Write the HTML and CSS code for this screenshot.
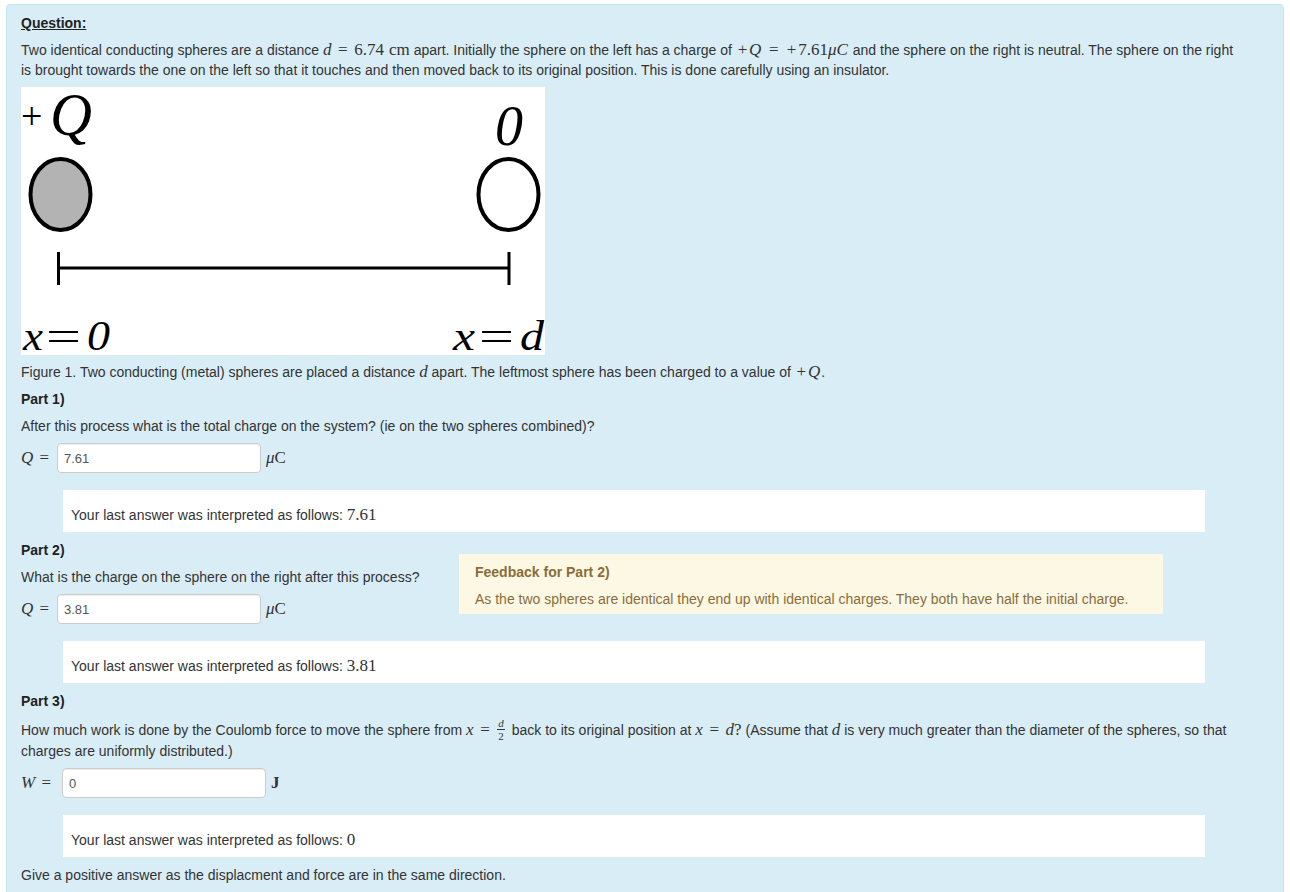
FILE: index.html
```html
<!DOCTYPE html>
<html>
<head>
<meta charset="utf-8">
<link rel="stylesheet" href="styles.css">
</head>
<body>
<div class="page">
  <div class="qbox">
    <h4 class="qlabel">Question:</h4>
    <p>Two identical conducting spheres are a distance <span class="m"><i>d</i><span class="eq">=</span>6.74<span class="sp"></span>cm</span> apart. Initially the sphere on the left has a charge of <span class="m"><span class="op">+</span><i class="q">Q</i><span class="eq">=</span><span class="op">+</span>7.61<i>μ</i><i class="q">C</i></span> and the sphere on the right is neutral. The sphere on the right is brought towards the one on the left so that it touches and then moved back to its original position. This is done carefully using an insulator.</p>

    <svg class="figure" width="524" height="268" viewBox="0 0 524 268">
      <rect x="0" y="0" width="524" height="268" fill="#ffffff"/>
      <text x="0" y="42" class="fup" font-size="38">+</text>
      <text x="29" y="48" class="fit" font-size="62" textLength="42" lengthAdjust="spacingAndGlyphs">Q</text>
      <text x="474" y="58" class="fit" font-size="58" textLength="28" lengthAdjust="spacingAndGlyphs">0</text>
      <ellipse cx="39.5" cy="107.5" rx="30" ry="35.5" fill="#b3b3b3" stroke="#000" stroke-width="4"/>
      <ellipse cx="487.5" cy="107.5" rx="30" ry="35.5" fill="#ffffff" stroke="#000" stroke-width="4"/>
      <line x1="37.5" y1="181" x2="488" y2="181" stroke="#000" stroke-width="3"/>
      <line x1="37.5" y1="165" x2="37.5" y2="198" stroke="#000" stroke-width="3"/>
      <line x1="488" y1="165" x2="488" y2="198" stroke="#000" stroke-width="3"/>
      <text x="2" y="263" class="fit" font-size="42" textLength="20" lengthAdjust="spacingAndGlyphs">x</text>
      <text x="25" y="263" class="fup" font-size="42" textLength="35" lengthAdjust="spacingAndGlyphs">=</text>
      <text x="66" y="263" class="fit" font-size="42" textLength="23" lengthAdjust="spacingAndGlyphs">0</text>
      <text x="432" y="263" class="fit" font-size="42" textLength="22" lengthAdjust="spacingAndGlyphs">x</text>
      <text x="458" y="263" class="fup" font-size="42" textLength="35" lengthAdjust="spacingAndGlyphs">=</text>
      <text x="499" y="263" class="fit" font-size="42" textLength="24" lengthAdjust="spacingAndGlyphs">d</text>
    </svg>

    <p>Figure 1. Two conducting (metal) spheres are placed a distance <span class="m"><i>d</i></span> apart. The leftmost sphere has been charged to a value of <span class="m"><span class="op">+</span><i class="q">Q</i></span>.</p>

    <h4 class="part">Part 1)</h4>
    <p>After this process what is the total charge on the system? (ie on the two spheres combined)?</p>
    <div class="answer-row">
      <span class="m lbl"><i class="q">Q</i><span class="eq">=</span></span>
      <input class="ans" type="text" value="7.61">
      <span class="m unit"><i>μ</i>C</span>
    </div>
    <div class="interp">Your last answer was interpreted as follows: <span class="m big">7.61</span></div>

    <div class="part-split">
      <div class="part-left">
        <h4 class="part">Part 2)</h4>
        <p>What is the charge on the sphere on the right after this process?</p>
        <div class="answer-row">
          <span class="m lbl"><i class="q">Q</i><span class="eq">=</span></span>
          <input class="ans" type="text" value="3.81">
          <span class="m unit"><i>μ</i>C</span>
        </div>
      </div>
      <div class="feedback">
        <h4 class="fb-title">Feedback for Part 2)</h4>
        <p class="fb-text">As the two spheres are identical they end up with identical charges. They both have half the initial charge.</p>
      </div>
    </div>
    <div class="interp">Your last answer was interpreted as follows: <span class="m big">3.81</span></div>

    <h4 class="part">Part 3)</h4>
    <p class="p3">How much work is done by the Coulomb force to move the sphere from <span class="m"><i>x</i><span class="eq">=</span><span class="frac"><span class="num"><i>d</i></span><span class="den">2</span></span></span> back to its original position at <span class="m"><i>x</i><span class="eq">=</span><i>d</i>?</span> (Assume that <span class="m"><i>d</i></span> is very much greater than the diameter of the spheres, so that charges are uniformly distributed.)</p>
    <div class="answer-row">
      <span class="m lbl lbl-w"><i class="q">W</i><span class="eq">=</span></span>
      <input class="ans" type="text" value="0">
      <span class="m unit unit-j">J</span>
    </div>
    <div class="interp">Your last answer was interpreted as follows: <span class="m big">0</span></div>

    <p>Give a positive answer as the displacment and force are in the same direction.</p>
  </div>
</div>
</body>
</html>
```

FILE: styles.css
```css
html, body {
  margin: 0;
  padding: 0;
  background: #ffffff;
}

body {
  font-family: "Liberation Sans", Arial, sans-serif;
  font-size: 14px;
  line-height: 20px;
  color: #333333;
}

.page {
  padding: 4px 0 0 6px;
}

.qbox {
  box-sizing: border-box;
  width: 1278px;
  background: #d9edf7;
  border: 1px solid #bce8f1;
  border-radius: 4px;
  padding: 8px 38px 40px 14px;
}

p {
  margin: 0 0 7px 0;
}

.qlabel {
  margin: 0 0 7px 0;
  font-size: 14px;
  font-weight: bold;
  text-decoration: underline;
  color: #222222;
  line-height: 20px;
}

.part {
  margin: 0 0 7px 0;
  font-size: 14px;
  font-weight: bold;
  line-height: 20px;
  color: #222222;
}

.m {
  font-family: "Liberation Serif", "Times New Roman", serif;
  font-size: 17px;
  white-space: nowrap;
}

.m i {
  font-style: italic;
}

.m .q {
  padding-right: 1px;
}

.eq {
  display: inline-block;
  width: 0.778em;
  margin: 0 0.278em;
  text-align: center;
}

.op {
  display: inline-block;
  width: 0.778em;
  text-align: center;
}

.sp {
  display: inline-block;
  width: 0.3em;
}

.figure {
  display: block;
  margin: 0 0 7px 0;
}

.fit {
  font-family: "Liberation Serif", "Times New Roman", serif;
  font-style: italic;
  fill: #000000;
}

.fup {
  font-family: "Liberation Serif", "Times New Roman", serif;
  fill: #000000;
}

.answer-row {
  display: flex;
  align-items: center;
  height: 30px;
  margin: 0 0 17px 0;
}

.lbl {
  display: inline-block;
  width: 36px;
  font-size: 17px;
  color: #333333;
}

.lbl .eq {
  margin-left: 0.2em;
  margin-right: 0;
}

.lbl-w {
  width: 41px;
}

.ans {
  box-sizing: border-box;
  width: 204px;
  height: 30px;
  border: 1px solid #cccccc;
  border-radius: 4px;
  background: #ffffff;
  padding: 0 6px;
  font-family: "Liberation Sans", Arial, sans-serif;
  font-size: 13px;
  color: #555555;
  box-shadow: inset 0 1px 1px rgba(0, 0, 0, 0.075);
  outline: none;
}

.unit {
  margin-left: 5px;
  font-size: 17px;
}

.unit-j {
  font-weight: bold;
}

.interp {
  box-sizing: border-box;
  width: 1142px;
  margin: 0 0 8px 42px;
  padding: 15px 8px 7px 8px;
  background: #ffffff;
  line-height: 20px;
}

.big {
  font-size: 17px;
}

.part-split {
  display: flex;
  align-items: flex-start;
}

.part-left {
  width: 438px;
  flex: none;
  margin-bottom: 17px;
}

.part-left .answer-row {
  margin-bottom: 0;
}

.feedback {
  box-sizing: border-box;
  width: 704px;
  flex: none;
  margin-top: 14px;
  padding: 8px 15px 5px 15px;
  background: #fcf8e3;
  border-left: 1px solid #fdfbf0;
  color: #8a6d3b;
}

.fb-title {
  margin: 0 0 7px 0;
  font-size: 14px;
  font-weight: bold;
  line-height: 20px;
}

.fb-text {
  margin: 0;
}

.p3 {
  line-height: 20px;
}

.frac {
  display: inline-block;
  vertical-align: -5px;
  text-align: center;
  font-size: 11px;
  line-height: 10px;
  margin: 0 3px 0 1px;
}

.frac .num {
  display: block;
  padding: 0 1px 1px;
  border-bottom: 1px solid #333333;
}

.frac .den {
  display: block;
  padding-top: 1px;
}
```
